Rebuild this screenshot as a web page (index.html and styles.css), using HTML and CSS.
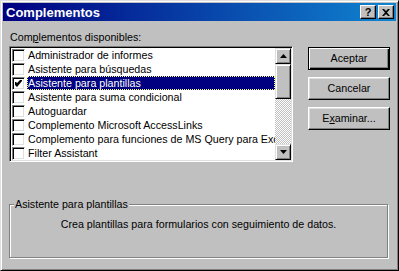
FILE: index.html
```html
<!DOCTYPE html>
<html lang="es">
<head>
  <meta charset="UTF-8" />
  <title>Complementos</title>
  <link rel="stylesheet" href="styles.css">
</head>
<body>

  <div class="window">
    <div class="titlebar">
      <span class="title">Complementos</span>
      <div class="controls">
        <span class="cap-btn help">?</span>
        <span class="cap-btn">
          <svg width="8" height="7" viewBox="0 0 8 7"><path d="M0 0h2l2 2 2-2h2L5 3.5 8 7H6L4 5 2 7H0l3-3.5z" fill="#000"/></svg>
        </span>
      </div>
    </div>

    <div class="content">
      <div class="main">
        <div class="list-col">
          <div class="caption">Com<u>p</u>lementos disponibles:</div>
          <div class="listbox">
            <ul class="items">
              <li><span class="check"></span><span class="name">Administrador de informes</span></li>
              <li><span class="check"></span><span class="name">Asistente para búsquedas</span></li>
              <li class="selected"><span class="check">
                <svg width="7" height="7" viewBox="0 0 7 7"><path d="M0 2h1l1 1 4-4v0h1v2L2 7 0 5z" fill="#000"/></svg>
              </span><span class="name">Asistente para plantillas</span></li>
              <li><span class="check"></span><span class="name">Asistente para suma condicional</span></li>
              <li><span class="check"></span><span class="name">Autoguardar</span></li>
              <li><span class="check"></span><span class="name">Complemento Microsoft AccessLinks</span></li>
              <li><span class="check"></span><span class="name">Complemento para funciones de MS Query para Excel</span></li>
              <li><span class="check"></span><span class="name">Filter Assistant</span></li>
            </ul>
            <div class="scrollbar">
              <span class="sb-btn">
                <svg width="7" height="4" viewBox="0 0 7 4"><path d="M3.5 0L7 4H0z" fill="#000"/></svg>
              </span>
              <span class="sb-thumb"></span>
              <span class="sb-track"></span>
              <span class="sb-btn">
                <svg width="7" height="4" viewBox="0 0 7 4"><path d="M0 0h7L3.5 4z" fill="#000"/></svg>
              </span>
            </div>
          </div>
        </div>

        <div class="buttons">
          <span class="btn default">Aceptar</span>
          <span class="btn">Cancelar</span>
          <span class="btn">E<u>x</u>aminar...</span>
        </div>
      </div>

      <fieldset class="group">
        <legend>Asistente para plantillas</legend>
        <p>Crea plantillas para formularios con seguimiento de datos.</p>
      </fieldset>
    </div>
  </div>

</body>
</html>
```

FILE: styles.css
```css
body {
  margin: 0;
  font-family: 'Liberation Sans', Arial, sans-serif;
  font-size: 10.7px;
  line-height: 13px;
  color: #000;
  background-color: #c0c0c0;
}

.window {
  width: 399px;
  height: 271px;
  box-sizing: border-box;
  border: 1px solid;
  border-color: #dfdfdf #000 #000 #dfdfdf;
  box-shadow: inset 1px 1px 0 #fff, inset -1px -1px 0 #808080;
  padding: 2px;
  background-color: #c0c0c0;
}

.titlebar {
  height: 18px;
  display: flex;
  align-items: center;
  justify-content: space-between;
  padding: 0 2px 0 3px;
  background: linear-gradient(to right, #000080, #1084d0);
}

.title {
  color: #fff;
  font-weight: bold;
  font-size: 13px;
}

.controls {
  display: flex;
  gap: 2px;
}

.cap-btn {
  width: 16px;
  height: 14px;
  box-sizing: border-box;
  display: flex;
  align-items: center;
  justify-content: center;
  background-color: #c0c0c0;
  border: 1px solid;
  border-color: #fff #000 #000 #fff;
  box-shadow: inset -1px -1px 0 #808080;
}

.cap-btn.help {
  font-weight: bold;
  font-size: 11px;
  line-height: 12px;
}

.content {
  padding: 10px 0 0 6px;
}

.main {
  display: flex;
  align-items: flex-start;
}

.list-col {
  width: 284px;
}

.caption {
  margin-left: 1px;
  margin-bottom: 2px;
}

.listbox {
  height: 116px;
  box-sizing: border-box;
  display: flex;
  background-color: #fff;
  border: 1px solid;
  border-color: #808080 #fff #fff #808080;
  box-shadow: inset 1px 1px 0 #000, inset -1px -1px 0 #dfdfdf;
  padding: 1px;
}

.items {
  list-style: none;
  margin: 0;
  padding: 0;
  flex: 1;
  overflow: hidden;
}

.items li {
  height: 14px;
  display: flex;
  align-items: center;
  padding-left: 1px;
  white-space: nowrap;
}

.check {
  flex: none;
  width: 13px;
  height: 13px;
  box-sizing: border-box;
  display: flex;
  align-items: center;
  justify-content: center;
  background-color: #fff;
  border: 1px solid;
  border-color: #808080 #fff #fff #808080;
  box-shadow: inset 1px 1px 0 #000, inset -1px -1px 0 #dfdfdf;
}

.name {
  margin-left: 2px;
  padding: 0 1px;
  height: 14px;
  line-height: 14px;
  box-sizing: border-box;
}

.selected .name {
  flex: 1;
  background-color: #000080;
  color: #fff;
  outline: 1px dotted #ffff80;
  outline-offset: -1px;
}

.scrollbar {
  width: 16px;
  flex: none;
  display: flex;
  flex-direction: column;
}

.sb-btn,
.sb-thumb {
  flex: none;
  width: 16px;
  height: 16px;
  box-sizing: border-box;
  display: flex;
  align-items: center;
  justify-content: center;
  background-color: #c0c0c0;
  border: 1px solid;
  border-color: #dfdfdf #000 #000 #dfdfdf;
  box-shadow: inset 1px 1px 0 #fff, inset -1px -1px 0 #808080;
}

.sb-thumb {
  height: 35px;
}

.sb-track {
  flex: 1;
  background-color: #fff;
  background-image: conic-gradient(#c0c0c0 25%, #fff 0 50%, #c0c0c0 0 75%, #fff 0);
  background-size: 2px 2px;
}

.buttons {
  margin: 16px 0 0 15px;
  display: flex;
  flex-direction: column;
  gap: 7px;
}

.btn {
  width: 82px;
  height: 23px;
  box-sizing: border-box;
  display: flex;
  align-items: center;
  justify-content: center;
  background-color: #c0c0c0;
  border: 1px solid;
  border-color: #fff #000 #000 #fff;
  box-shadow: inset -1px -1px 0 #808080, inset 1px 1px 0 #dfdfdf;
}

.btn.default {
  border: 1px solid #000;
  box-shadow: inset 1px 1px 0 #fff, inset -1px -1px 0 #000, inset -2px -2px 0 #808080;
}

.group {
  width: 379px;
  box-sizing: border-box;
  margin: 36px 0 0 0;
  padding: 0;
  height: 60px;
  border: 1px solid #808080;
  box-shadow: 1px 1px 0 #fff, inset 1px 1px 0 #fff;
}

.group legend {
  margin-left: 4px;
  padding: 0 1px;
  background-color: #c0c0c0;
}

.group p {
  margin: 7px 0 0 0;
  text-align: center;
}
```
